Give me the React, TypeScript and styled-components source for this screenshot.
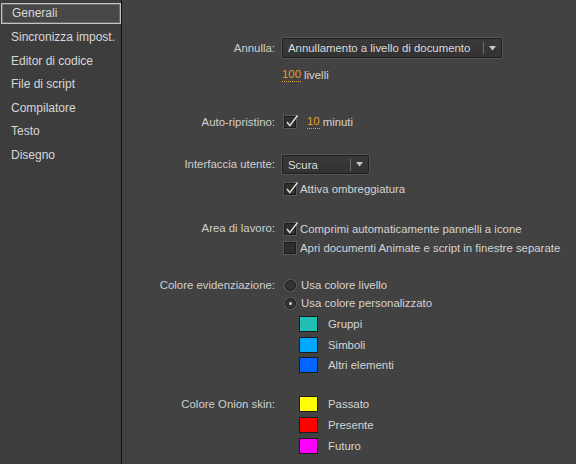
import React, { useState } from "react";
import styled, { createGlobalStyle } from "styled-components";

const GlobalStyle = createGlobalStyle`
  html, body {
    margin: 0;
    padding: 0;
    background: #424242;
  }
  body {
    font-family: "Liberation Sans", Arial, sans-serif;
    font-size: 11.4px;
    color: #d2d2d2;
  }
`;

const Window = styled.div`
  display: flex;
  width: 576px;
  height: 464px;
  overflow: hidden;
`;

const Sidebar = styled.div`
  width: 121px;
  flex-shrink: 0;
  background: #3d3d3d;
  border-right: 1px solid #111;
  padding-top: 3px;
  box-sizing: content-box;
`;

const NavItem = styled.div<{ $active?: boolean }>`
  height: ${(p) => (p.$active ? "19px" : "23.5px")};
  line-height: ${(p) => (p.$active ? "19px" : "23.5px")};
  padding-left: ${(p) => (p.$active ? "10px" : "11px")};
  margin-left: ${(p) => (p.$active ? "1px" : "0")};
  color: #d8d8d8;
  font-size: 12px;
  background: ${(p) => (p.$active ? "#474747" : "transparent")};
  border: ${(p) => (p.$active ? "1px solid #c4c4c4" : "none")};
  margin-bottom: ${(p) => (p.$active ? "2px" : "0")};
  box-shadow: ${(p) => (p.$active ? "inset 0 0 0 1px #6a6a6a" : "none")};
  white-space: nowrap;
`;

const Main = styled.div`
  flex: 1;
  background: #424242;
  padding-top: 38px;
`;

const Section = styled.div<{ $top?: number }>`
  display: flex;
  align-items: flex-start;
  margin-top: ${(p) => p.$top ?? 0}px;
`;

const Label = styled.div<{ $h: number }>`
  width: 153px;
  text-align: right;
  height: ${(p) => p.$h}px;
  line-height: ${(p) => p.$h}px;
  color: #cfcfcf;
  white-space: nowrap;
  flex-shrink: 0;
`;

const Controls = styled.div`
  display: flex;
  flex-direction: column;
  margin-left: 7px;
`;

const Row = styled.div<{ $h: number; $indent?: number; $top?: number }>`
  display: flex;
  align-items: center;
  height: ${(p) => p.$h}px;
  padding-left: ${(p) => p.$indent ?? 0}px;
  margin-top: ${(p) => p.$top ?? 0}px;
  white-space: nowrap;
  color: #d4d4d4;
`;

const Select = styled.div<{ $w: number; $h: number }>`
  display: flex;
  align-items: center;
  width: ${(p) => p.$w}px;
  height: ${(p) => p.$h}px;
  box-sizing: border-box;
  border: 1px solid #1e1e1e;
  border-radius: 2px;
  background: linear-gradient(#3a3a3a, #323232);
  box-shadow: 0 0 0 1px #555;
  color: #dcdcdc;
`;

const SelectText = styled.div`
  flex: 1;
  padding-left: 5px;
`;

const SelectArrow = styled.div`
  width: 16px;
  height: 12px;
  border-left: 1px solid #6a6a6a;
  display: flex;
  align-items: center;
  justify-content: center;
  margin-right: 1px;
`;

const Number = styled.span`
  color: #e6a02e;
  border-bottom: 1px dotted #e6a02e;
  line-height: 13px;
  margin-right: 3px;
`;

const Box = styled.div`
  width: 12px;
  height: 12px;
  box-sizing: border-box;
  border: 1px solid #1c1c1c;
  background: #2f2f2f;
  box-shadow: 0 0 0 1px #575757;
  margin: 0 4px 0 2px;
  position: relative;
  flex-shrink: 0;
`;

const Tick = styled.svg`
  position: absolute;
  left: 0px;
  top: -3px;
`;

const Radio = styled.div<{ $on?: boolean }>`
  width: 11px;
  height: 11px;
  box-sizing: border-box;
  border-radius: 50%;
  border: 1px solid #1c1c1c;
  background: #333;
  box-shadow: 0 0 0 1px #5a5a5a;
  margin: 0 5px 0 3px;
  display: flex;
  align-items: center;
  justify-content: center;
  &::after {
    content: "";
    width: 3px;
    height: 3px;
    border-radius: 50%;
    background: ${(p) => (p.$on ? "#cfcfcf" : "transparent")};
  }
`;

const Swatch = styled.div<{ $c: string }>`
  width: 19px;
  height: 16px;
  box-sizing: border-box;
  border: 1px solid #1a1a1a;
  background: ${(p) => p.$c};
  margin-right: 10px;
  flex-shrink: 0;
`;

const Arrow = () => (
  <svg width="7" height="5" viewBox="0 0 7 5">
    <path d="M0 0h7L3.5 4.5z" fill="#c8c8c8" />
  </svg>
);

const Check: React.FC<{ on: boolean }> = ({ on }) => (
  <Box>
    {on && (
      <Tick width="14" height="14" viewBox="0 0 14 14">
        <path d="M2 8l2.8 3.6L12.5 1.5" stroke="#e0e0e0" strokeWidth="1.5" fill="none" />
      </Tick>
    )}
  </Box>
);

const navItems = [
  "Generali",
  "Sincronizza impost.",
  "Editor di codice",
  "File di script",
  "Compilatore",
  "Testo",
  "Disegno",
];

const App: React.FC = () => {
  const [active, setActive] = useState(0);
  const [shade, setShade] = useState(true);
  const [autoRec, setAutoRec] = useState(true);
  const [compress, setCompress] = useState(true);
  const [separate, setSeparate] = useState(false);
  const [custom, setCustom] = useState(true);

  return (
    <Window>
      <GlobalStyle />
      <Sidebar>
        {navItems.map((n, i) => (
          <NavItem key={n} $active={i === active} onClick={() => setActive(i)}>
            {n}
          </NavItem>
        ))}
      </Sidebar>
      <Main>
        <Section>
          <Label $h={20}>Annulla:</Label>
          <Controls>
            <Select $w={220} $h={20}>
              <SelectText>Annullamento a livello di documento</SelectText>
              <SelectArrow>
                <Arrow />
              </SelectArrow>
            </Select>
            <Row $h={18} $top={8}>
              <Number>100</Number>livelli
            </Row>
          </Controls>
        </Section>

        <Section $top={29}>
          <Label $h={18}>Auto-ripristino:</Label>
          <Controls>
            <Row $h={18} onClick={() => setAutoRec(!autoRec)}>
              <Check on={autoRec} />
              <span style={{ width: 7 }} />
              <Number>10</Number>minuti
            </Row>
          </Controls>
        </Section>

        <Section $top={24}>
          <Label $h={19}>Interfaccia utente:</Label>
          <Controls>
            <Select $w={87} $h={19}>
              <SelectText>Scura</SelectText>
              <SelectArrow>
                <Arrow />
              </SelectArrow>
            </Select>
            <Row $h={18} $top={6} onClick={() => setShade(!shade)}>
              <Check on={shade} />
              Attiva ombreggiatura
            </Row>
          </Controls>
        </Section>

        <Section $top={21}>
          <Label $h={19}>Area di lavoro:</Label>
          <Controls>
            <Row $h={19} onClick={() => setCompress(!compress)}>
              <Check on={compress} />
              Comprimi automaticamente pannelli a icone
            </Row>
            <Row $h={19} onClick={() => setSeparate(!separate)}>
              <Check on={separate} />
              Apri documenti Animate e script in finestre separate
            </Row>
          </Controls>
        </Section>

        <Section $top={19}>
          <Label $h={18}>Colore evidenziazione:</Label>
          <Controls>
            <Row $h={18} onClick={() => setCustom(false)}>
              <Radio $on={!custom} />
              Usa colore livello
            </Row>
            <Row $h={18} onClick={() => setCustom(true)}>
              <Radio $on={custom} />
              Usa colore personalizzato
            </Row>
            <Row $h={20.5} $indent={17} $top={2}>
              <Swatch $c="#1fbfb3" />
              Gruppi
            </Row>
            <Row $h={20.5} $indent={17}>
              <Swatch $c="#00a8ff" />
              Simboli
            </Row>
            <Row $h={20.5} $indent={17}>
              <Swatch $c="#0066ff" />
              Altri elementi
            </Row>
          </Controls>
        </Section>

        <Section $top={18}>
          <Label $h={21}>Colore Onion skin:</Label>
          <Controls>
            <Row $h={21} $indent={17}>
              <Swatch $c="#ffff00" />
              Passato
            </Row>
            <Row $h={21} $indent={17}>
              <Swatch $c="#ff0000" />
              Presente
            </Row>
            <Row $h={21} $indent={17}>
              <Swatch $c="#ff00ff" />
              Futuro
            </Row>
          </Controls>
        </Section>
      </Main>
    </Window>
  );
};

export default App;
